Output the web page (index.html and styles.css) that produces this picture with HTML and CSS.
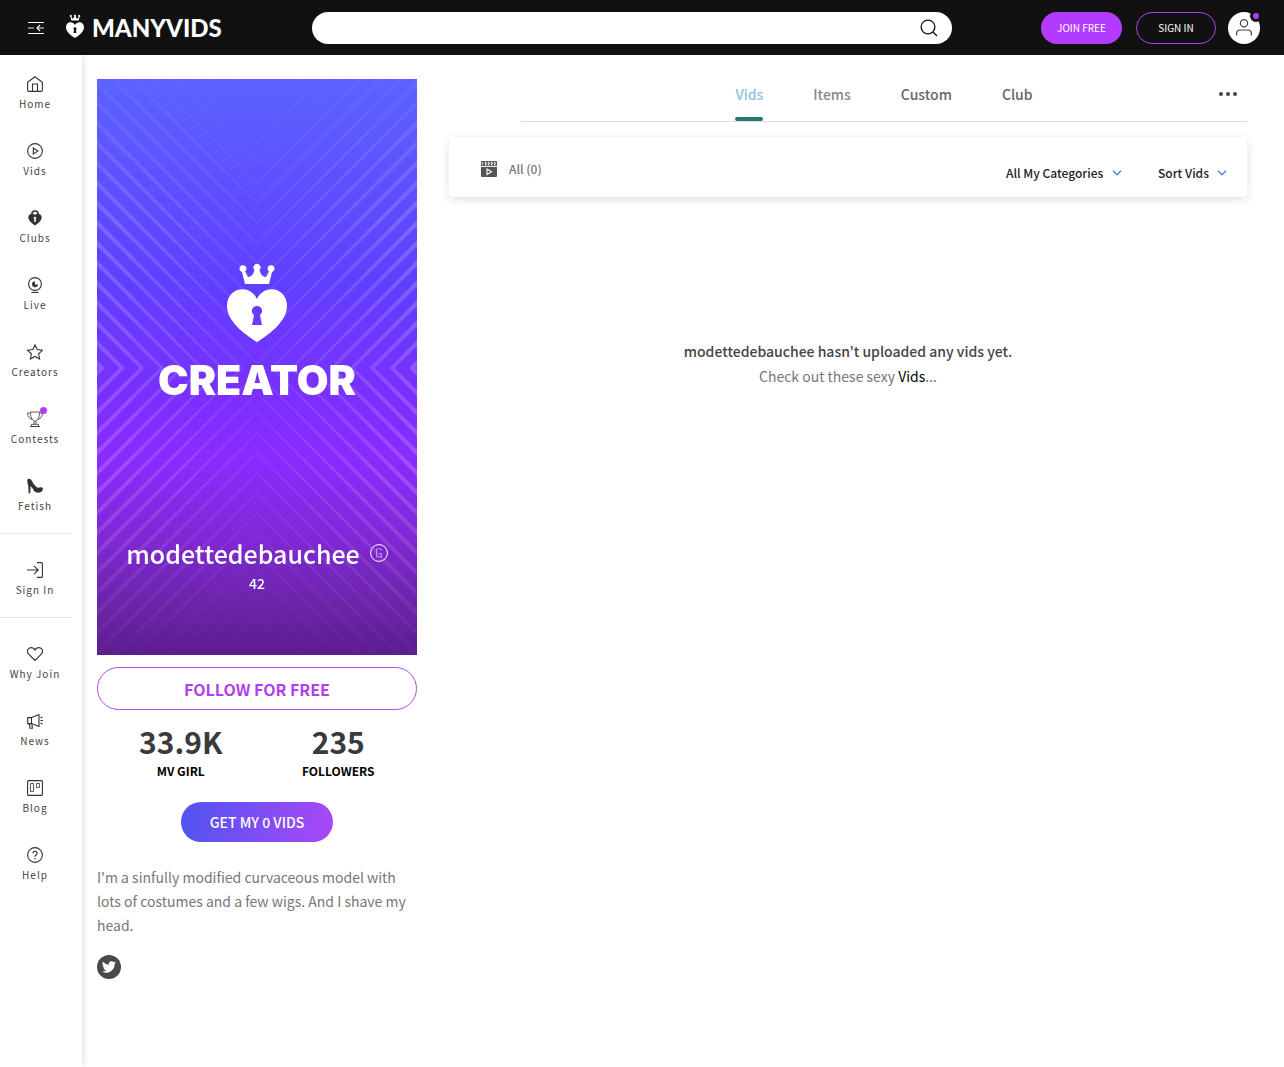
FILE: index.html
```html
<!DOCTYPE html>
<html lang="en">
<head>
    <meta charset="UTF-8">
    <meta name="viewport" content="width=device-width, initial-scale=1.0">
    <title>modettedebauchee - ManyVids</title>
    <link rel="stylesheet" href="styles.css">
</head>
<body>
    <header class="topbar">
        <div class="topbar-left">
            <button class="menu-btn" aria-label="Toggle menu">
                <svg width="16" height="12" viewBox="0 0 16 12" fill="none" stroke="#fff"><path d="M0 .5h16M0 11.5h16"/><path d="M0 6h6M9 6h7" stroke-width="1.500" stroke-opacity=".6"/><path d="M12 3L9 6l3 3" stroke-width="1.200"/></svg>
            </button>
            <a href="#" class="logo">
                <svg width="18" height="24" viewBox="0 0 60 80" fill="#fff"><use href="#crownHeart"/></svg>
                <span>MANYVIDS</span>
            </a>
        </div>
        <form class="search">
            <input type="search" aria-label="Search">
            <button type="button" aria-label="Search">
                <svg width="18" height="18" viewBox="0 0 18 18" fill="none" stroke="#111" stroke-width="1.3"><circle cx="8" cy="8" r="6.9"/><path d="M13 13l4 4"/></svg>
            </button>
        </form>
        <div class="topbar-right">
            <button class="pill pill-join">JOIN FREE</button>
            <button class="pill pill-sign">SIGN IN</button>
            <button class="avatar" aria-label="Account">
                <svg width="16" height="17" viewBox="0 0 16 17" fill="none" stroke="#444" stroke-width="1.2"><circle cx="8" cy="4.200" r="3.600"/><path d="M.6 16.500v-2c0-2.200 1.400-3.500 3.500-3.500h7.800c2.100 0 3.500 1.300 3.500 3.500v2"/></svg>
                <span class="avatar-dot"></span>
            </button>
        </div>
    </header>

    <div class="page">
        <nav class="sidebar">
            <ul class="menu">
                <li><a href="#">
                    <svg viewBox="0 0 16 16"><path d="M.6 6.300L8 .8l7.400 5.500v7.700c0 .9-.6 1.400-1.400 1.400H2c-.8 0-1.400-.5-1.400-1.400z"/><path d="M5.500 15.400V8h5v7.400"/></svg>
                    <span>Home</span></a></li>
                <li><a href="#">
                    <svg viewBox="0 0 16 16"><circle cx="8" cy="8" r="7.400"/><path d="M6.300 5v6l4.600-3z"/></svg>
                    <span>Vids</span></a></li>
                <li><a href="#">
                    <svg viewBox="0 0 16 16"><path d="M5 4.500V3.200C5 .2 11 .2 11 3.200v1.300" stroke-width="1.500"/><path d="M8 15.500C4 12.700 1.300 10.200 1.300 7.200c0-3.600 4.500-4.500 6.700-2.200 2.200-2.300 6.700-1.400 6.700 2.200 0 3-2.700 5.500-6.700 8.300z" fill="#333" stroke="none"/><path d="M8 8.500V12" stroke="#fff" stroke-width="1.500"/><circle cx="8" cy="8" r="1.200" fill="#fff" stroke="none"/></svg>
                    <span>Clubs</span></a></li>
                <li><a href="#">
                    <svg viewBox="0 0 16 16"><circle cx="8" cy="7" r="6.400"/><path d="M4.500 15.400h7"/><path d="M8 4.200a3 3 0 1 0 3 3.300H8z" fill="#333" stroke="none"/></svg>
                    <span>Live</span></a></li>
                <li><a href="#">
                    <svg viewBox="0 0 16 16"><path d="M8 .9l2.200 4.700 5.200.7-3.800 3.500 1 5.200L8 12.500 3.400 15l1-5.200L.6 6.300l5.200-.7z"/></svg>
                    <span>Creators</span></a></li>
                <li><a href="#" class="has-dot">
                    <svg viewBox="0 0 16 16"><path d="M3.500 1h9c0 5-1 8-4.500 9.500C4.500 9 3.500 6 3.500 1z" stroke-width=".8"/><path d="M3.500 2H.6c0 3.500 1.500 5.800 5 6.500M12.500 2h2.900c0 3.500-1.500 5.800-5 6.500M7 10.300v3M9 10.300v3M4.500 13.300h7v2.200h-7zM3 15.500h10" stroke-width=".8"/></svg>
                    <span>Contests</span></a></li>
                <li><a href="#">
                    <svg viewBox="0 0 16 16"><path d="M.3 1.500C2.300-.2 4 .8 5 3c2 4 4 6 6 6.800 1.500-.8 4-.8 4.800.2.400 2.700-1.200 4.700-4.300 4.700-2.800 0-4.500-1-5.500-3.700L3.600 8l-.3 7.200H1.600L1.300 8C.5 6 .1 3.500.3 1.500z" fill="#333" stroke="none"/></svg>
                    <span>Fetish</span></a></li>
            </ul>
            <ul class="menu">
                <li><a href="#">
                    <svg viewBox="0 0 16 16"><path d="M0 8h11M7 3.800L11.200 8 7 12.200M10 .6h4.400c.6 0 1 .4 1 1v12.800c0 .6-.4 1-1 1H10"/></svg>
                    <span>Sign In</span></a></li>
            </ul>
            <ul class="menu">
                <li><a href="#">
                    <svg viewBox="0 0 16 16"><path d="M8 14.500L1.700 8.200C-1 5.200 1 1.600 4 1.600c2 0 3.300 1 4 2.500.7-1.500 2-2.500 4-2.500 3 0 5 3.600 2.300 6.600z"/></svg>
                    <span>Why Join</span></a></li>
                <li><a href="#">
                    <svg viewBox="0 0 16 16"><path d="M.7 4.600h3.800v6H.7zM4.500 4.600L12 1.500v12l-7.500-2.900M2.200 10.600l.8 4.600h2.500l-.8-4.400M13.500 5l2-1M13.500 7.500H16M13.500 10l2 1"/></svg>
                    <span>News</span></a></li>
                <li><a href="#">
                    <svg viewBox="0 0 16 16"><rect x=".6" y=".6" width="14.800" height="14.800" rx="1"/><path d="M3.500 3.500h3v8h-3zM9.500 3.500h3v4h-3z" stroke-width=".8"/></svg>
                    <span>Blog</span></a></li>
                <li><a href="#">
                    <svg viewBox="0 0 16 16"><circle cx="8" cy="8" r="7.400"/><path d="M5.900 6.300c0-2.800 4.300-2.700 4.200 0C10 8 8 8 8 9.800M8 11v1.300"/></svg>
                    <span>Help</span></a></li>
            </ul>
        </nav>

        <aside class="profile">
            <div class="portrait">
                <svg class="portrait-bg" viewBox="0 0 320 576" preserveAspectRatio="none" aria-hidden="true">
                    <defs>
                        <g id="crownHeart">
                            <path d="M18 22l-3-12a3.500 3.500 0 1 1 3-.5l3 5.500c3 0 5-2 6.500-7a3.500 3.500 0 1 1 5 0c1.500 5 3.500 7 6.500 7l3-5.500a3.500 3.500 0 1 1 3 .5l-3 12z"/>
                            <path fill-rule="evenodd" d="M30 80C17 72 0 59 0 44c0-18 22-23 30-7 8-16 30-11 30 7 0 15-17 28-30 36zM25 63h10l-2-10c4-3 2-9-3-9s-7 6-3 9z"/>
                        </g>
                        <linearGradient id="sky" x1="0" y1="0" x2="0" y2="1">
                            <stop offset="0" stop-color="#5b62ff"/>
                            <stop offset=".35" stop-color="#603fff"/>
                            <stop offset=".55" stop-color="#7a2fff"/>
                            <stop offset=".66" stop-color="#8a2bff"/>
                            <stop offset=".8" stop-color="#7f28d4"/>
                            <stop offset=".92" stop-color="#6a24a6"/>
                            <stop offset="1" stop-color="#5c1d8e"/>
                        </linearGradient>
                        <linearGradient id="edges">
                            <stop offset="0" stop-color="#fff"/>
                            <stop offset=".5" stop-color="#666"/>
                            <stop offset="1" stop-color="#fff"/>
                        </linearGradient>
                        <linearGradient id="ends" x1="0" y1="0" x2="0" y2="1">
                            <stop offset="0" stop-opacity=".8"/>
                            <stop offset=".25" stop-opacity="0"/>
                            <stop offset=".7" stop-opacity="0"/>
                            <stop offset="1" stop-opacity=".9"/>
                        </linearGradient>
                        <mask id="fade">
                            <rect width="320" height="576" fill="url(#edges)"/>
                            <rect width="320" height="576" fill="url(#ends)"/>
                        </mask>
                        <clipPath id="corner"><rect width="160" height="289"/></clipPath>
                        <path id="stripe" d="M0 1l160 162v2L0 7z" fill="#fff"/>
                        <g id="fiveStripes">
                            <use href="#stripe"/>
                            <use href="#stripe" y="20"/>
                            <use href="#stripe" y="40"/>
                            <use href="#stripe" y="60"/>
                            <use href="#stripe" y="80"/>
                        </g>
                        <g id="quarter" clip-path="url(#corner)">
                            <use href="#fiveStripes" y="-200"/>
                            <use href="#fiveStripes" y="-100"/>
                            <use href="#fiveStripes"/>
                            <use href="#fiveStripes" y="100"/>
                            <use href="#fiveStripes" y="200"/>
                        </g>
                    </defs>
                    <rect width="320" height="576" fill="url(#sky)"/>
                    <g mask="url(#fade)" opacity=".18">
                        <use href="#quarter"/>
                        <use href="#quarter" transform="translate(320 0) scale(-1 1)"/>
                        <use href="#quarter" transform="translate(0 578) scale(1 -1)"/>
                        <use href="#quarter" transform="translate(320 578) scale(-1 -1)"/>
                    </g>
                </svg>
                <div class="portrait-mark">
                    <svg width="60" height="80" viewBox="0 0 60 80" fill="#fff"><use href="#crownHeart"/></svg>
                    <span>CREATOR</span>
                </div>
                <div class="portrait-info">
                    <h1>modettedebauchee
                        <svg width="18" height="18" viewBox="0 0 18 18" fill="none" stroke="#fff"><circle cx="9" cy="9" r="8.400"/><path d="M11.500 6.500V5h-5v8h5V9.500H9" stroke-opacity=".6" stroke-width=".8"/></svg>
                    </h1>
                    <p>42</p>
                </div>
            </div>

            <button class="follow-btn">FOLLOW FOR FREE</button>

            <dl class="stats">
                <div><dd>33.9K</dd><dt>MV GIRL</dt></div>
                <div><dd>235</dd><dt>FOLLOWERS</dt></div>
            </dl>

            <button class="vids-btn">GET MY 0 VIDS</button>

            <p class="bio">I'm a sinfully modified curvaceous model with lots of costumes and a few wigs. And I shave my head.</p>

            <a href="#" class="twitter" aria-label="Twitter">
                <svg width="14" height="12" viewBox="0 0 24 20" fill="#fff"><path d="M24 2.400a10 10 0 0 1-2.800.8A5 5 0 0 0 23.300.5a10 10 0 0 1-3.100 1.200 4.900 4.900 0 0 0-8.400 4.500A14 14 0 0 1 1.700 1a4.900 4.900 0 0 0 1.500 6.600 5 5 0 0 1-2.200-.6c0 2.300 1.600 4.400 3.900 4.900a5 5 0 0 1-2.200.1 4.900 4.900 0 0 0 4.600 3.400A10 10 0 0 1 0 17.500 14 14 0 0 0 21.500 5a10 10 0 0 0 2.500-2.600z"/></svg>
            </a>
        </aside>

        <main class="content">
            <nav class="tabs">
                <div class="tab-list">
                    <a href="#" class="active">Vids</a>
                    <a href="#" class="muted">Items</a>
                    <a href="#">Custom</a>
                    <a href="#">Club</a>
                </div>
                <button class="more-btn" aria-label="More">
                    <svg width="18" height="4" viewBox="0 0 18 4" fill="#444"><circle cx="2" cy="2" r="2"/><circle cx="9" cy="2" r="2"/><circle cx="16" cy="2" r="2"/></svg>
                </button>
            </nav>

            <section class="filters">
                <a href="#" class="all-link">
                    <svg width="16" height="16" viewBox="0 0 16 16"><path d="M1 0h14a1 1 0 0 1 1 1v14a1 1 0 0 1-1 1H1a1 1 0 0 1-1-1V1a1 1 0 0 1 1-1z" fill="#555"/><path d="M0 5.400h16" stroke="#fff"/><path d="M4 .8l1.300 1.700L4 4.200M7 .8l1.300 1.700L7 4.200M10 .8l1.300 1.700L10 4.200M13 .8l1.300 1.700L13 4.200M1.500 1.500v2" fill="none" stroke="#fff" stroke-width="1.100"/><path d="M6 8v5.500l4.500-2.700z" fill="none" stroke="#fff" stroke-width="1.100"/></svg>
                    All (0)
                </a>
                <div class="selects">
                    <div class="select">
                        <select aria-label="Categories"><option>All My Categories</option></select>
                        <svg width="10" height="6" viewBox="0 0 10 6" fill="none" stroke="#4a8bd6" stroke-width="1.500"><path d="M1 .8l4 4 4-4"/></svg>
                    </div>
                    <div class="select">
                        <select aria-label="Sort"><option>Sort Vids</option></select>
                        <svg width="10" height="6" viewBox="0 0 10 6" fill="none" stroke="#4a8bd6" stroke-width="1.500"><path d="M1 .8l4 4 4-4"/></svg>
                    </div>
                </div>
            </section>

            <section class="empty">
                <h2>modettedebauchee hasn’t uploaded any vids yet.</h2>
                <p>Check out these sexy <a href="#">Vids</a>...</p>
            </section>
        </main>
    </div>
</body>
</html>
```
FILE: styles.css
```css
* {
    box-sizing: border-box;
}

body {
    margin: 0;
    min-height: 100vh;
    display: flex;
    flex-direction: column;
    font-family: "Source Sans Pro", "Noto Sans CJK KR", sans-serif;
    font-size: 14px;
    line-height: 24px;
    color: #777;
    background: #fff;
}

h1, h2, p, ul, dl, dd {
    margin: 0;
    padding: 0;
}

a {
    color: inherit;
    text-decoration: none;
}

button, input, select {
    font-family: inherit;
    border: none;
    background: none;
    padding: 0;
    cursor: pointer;
}

svg {
    display: block;
}

/* header */
.topbar {
    display: flex;
    align-items: center;
    height: 55px;
    padding-right: 24px;
    background: #111;
}

.topbar-left {
    display: flex;
    align-items: center;
    gap: 22px;
    min-width: 312px;
    padding-left: 28px;
}

.logo {
    display: flex;
    align-items: center;
    gap: 8px;
    color: #fff;
    font-family: Lato, sans-serif;
    font-size: 24px;
    font-weight: 900;
}

.logo svg {
    margin-bottom: 4px;
}

.search {
    display: flex;
    align-items: center;
    flex: 1;
    max-width: 640px;
    height: 32px;
    padding: 0 14px;
    border-radius: 16px;
    background: #fff;
}

.search input {
    flex: 1;
    min-width: 0;
    outline: none;
    font-size: 14px;
}

.topbar-right {
    display: flex;
    align-items: center;
    margin-left: auto;
}

.pill {
    height: 32px;
    border-radius: 16px;
    color: #fff;
    font-size: 10px;
}

.pill-join {
    width: 81px;
    margin-right: 14px;
    background: #b33bff;
}

.pill-sign {
    width: 80px;
    margin-right: 12px;
    border: 1px solid #b33bff;
}

.avatar {
    position: relative;
    display: flex;
    align-items: center;
    justify-content: center;
    width: 32px;
    height: 32px;
    border-radius: 50%;
    background: #fff;
}

.avatar-dot {
    position: absolute;
    top: -2px;
    right: -2px;
    width: 12px;
    height: 12px;
    border: 3px solid #111;
    border-radius: 50%;
    background: #b33bff;
}

/* layout */
.page {
    display: flex;
    flex: 1;
}

.sidebar {
    width: 82px;
    flex-shrink: 0;
    box-shadow: 2px 0 5px rgba(0, 0, 0, 0.1);
}

.menu {
    display: flex;
    flex-direction: column;
    gap: 31px;
    width: 72px;
    padding: 28px 2px 19px 0;
    list-style: none;
    border-bottom: 1px solid #e5e5e5;
}

.menu:first-child {
    padding-top: 21px;
}

.menu:last-child {
    border-bottom: none;
}

.menu a {
    position: relative;
    display: flex;
    flex-direction: column;
    align-items: center;
    gap: 4px;
    color: #444;
    font-size: 10px;
    line-height: 16px;
    letter-spacing: 1px;
    white-space: nowrap;
}

.menu svg {
    width: 16px;
    height: 16px;
    fill: none;
    stroke: #333;
    stroke-width: 1.1;
}

.has-dot::after {
    content: "";
    position: absolute;
    top: -4px;
    right: 23px;
    width: 7px;
    height: 7px;
    border-radius: 50%;
    background: #b33bff;
}

/* profile column */
.profile {
    display: flex;
    flex-direction: column;
    width: 320px;
    flex-shrink: 0;
    margin: 24px 32px 24px 15px;
}

.portrait {
    position: relative;
    display: flex;
    flex-direction: column;
    align-items: center;
    justify-content: space-between;
    aspect-ratio: 5 / 9;
    padding: 183px 0 60px;
    color: #fff;
}

.portrait-bg {
    position: absolute;
    inset: 0;
    width: 100%;
    height: 100%;
}

.portrait-mark {
    position: relative;
    display: flex;
    flex-direction: column;
    align-items: center;
    gap: 16px;
    font-family: Inter, sans-serif;
    font-size: 41px;
    font-weight: 900;
    line-height: 44px;
}

.portrait-info {
    position: relative;
    text-align: center;
}

.portrait-info h1 {
    display: flex;
    align-items: center;
    gap: 10px;
    font-size: 25px;
    font-weight: 500;
    line-height: 36px;
}

.portrait-info p {
    font-weight: 500;
}

.follow-btn {
    height: 43px;
    margin-top: 12px;
    border: 1px solid #b04ae8;
    border-radius: 22px;
    color: #b13fee;
    font-size: 16px;
    font-weight: 700;
}

.stats {
    display: flex;
    margin-top: 12px;
    padding-left: 5px;
    text-align: center;
}

.stats div {
    flex: 1;
}

.stats dd {
    color: #3a3a3c;
    font-size: 30px;
    font-weight: 700;
    line-height: 38px;
}

.stats dt {
    color: #000;
    font-size: 12px;
    font-weight: 700;
    line-height: 22px;
}

.vids-btn {
    align-self: center;
    width: 152px;
    height: 40px;
    margin: 20px 0 23px;
    border-radius: 20px;
    background: linear-gradient(100deg, #4f55f0, #aa47f8);
    color: #fff;
    font-size: 14px;
    font-weight: 500;
}

.twitter {
    display: flex;
    align-items: center;
    justify-content: center;
    width: 24px;
    height: 24px;
    margin-top: 18px;
    border-radius: 50%;
    background: #4a4a4a;
}

/* main column */
.content {
    flex: 1;
    min-width: 0;
    padding-right: 37px;
}

.tabs {
    display: grid;
    grid-template-columns: 1fr auto 1fr;
    height: 67px;
    margin-left: 72px;
    border-bottom: 1px solid #ddd;
}

.tab-list {
    display: flex;
    grid-column: 2;
    gap: 50px;
    color: #666;
    font-weight: 500;
}

.tab-list a {
    display: flex;
    flex-direction: column;
    justify-content: space-between;
    padding-top: 27px;
}

.tab-list .active {
    color: #8cc4d8;
}

.tab-list .active::after {
    content: "";
    height: 4px;
    border-radius: 2px;
    background: #25786c;
}

.tab-list .muted {
    color: #888;
}

.more-btn {
    justify-self: end;
    margin: 12px 10px 0 0;
}

.filters {
    display: flex;
    align-items: center;
    justify-content: space-between;
    height: 60px;
    margin-top: 15px;
    padding: 4px 20px 0 32px;
    border-radius: 4px;
    box-shadow: 0 2px 8px rgba(0, 0, 0, 0.14);
}

.all-link {
    display: flex;
    align-items: center;
    gap: 12px;
    font-size: 12px;
    font-weight: 500;
}

.selects {
    display: flex;
    gap: 36px;
    padding-top: 7px;
}

.select {
    display: grid;
    align-items: center;
}

.select select,
.select svg {
    grid-area: 1 / 1;
}

.select select {
    appearance: none;
    padding-right: 18px;
    color: #222;
    font-size: 12px;
    font-weight: 500;
}

.select svg {
    justify-self: end;
    pointer-events: none;
}

.empty {
    margin-top: 141px;
    text-align: center;
}

.empty h2 {
    color: #444;
    font-size: 14px;
    font-weight: 500;
    line-height: 26px;
}

.empty a {
    color: #000;
}
```
